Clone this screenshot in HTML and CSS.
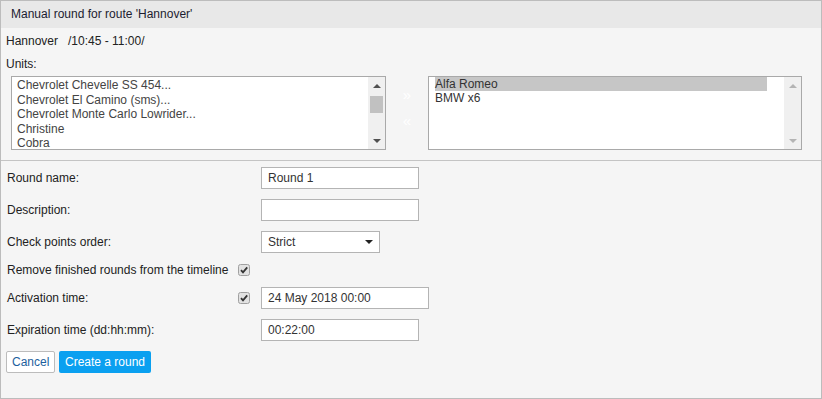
FILE: index.html
```html
<!DOCTYPE html>
<html lang="en">
<head>
	<meta charset="UTF-8">
	<title>Manual round</title>
	<link rel="stylesheet" href="styles.css">
</head>
<body>
	<div class="dialog">
		<div class="head">Manual round for route 'Hannover'</div>
		<div class="units">
			<div class="route">Hannover&nbsp;&nbsp;&nbsp;/10:45 - 11:00/</div>
			<div class="caption">Units:</div>
			<div class="lists">
				<div class="list">
					<ul class="items">
						<li>Chevrolet Chevelle SS 454...</li>
						<li>Chevrolet El Camino (sms)...</li>
						<li>Chevrolet Monte Carlo Lowrider...</li>
						<li>Christine</li>
						<li>Cobra</li>
					</ul>
					<div class="scroll">
						<span class="arr up"></span>
						<span class="thumb"></span>
						<span class="arr down"></span>
					</div>
				</div>
				<div class="move">
					<span>&raquo;</span>
					<span>&laquo;</span>
				</div>
				<div class="list">
					<ul class="items right">
						<li class="sel">Alfa Romeo</li>
						<li>BMW x6</li>
					</ul>
					<div class="scroll off">
						<span class="arr up"></span>
						<span class="arr down"></span>
					</div>
				</div>
			</div>
		</div>
		<div class="form">
			<div class="row">
				<div class="label">Round name:</div>
				<div class="field">Round 1</div>
			</div>
			<div class="row">
				<div class="label">Description:</div>
				<div class="field"></div>
			</div>
			<div class="row">
				<div class="label">Check points order:</div>
				<div class="field select">Strict<span class="caret"></span></div>
			</div>
			<div class="row small">
				<div class="label short">Remove finished rounds from the timeline</div>
				<span class="check"><svg width="12" height="12" viewBox="0 0 12 12"><rect x="0.5" y="0.5" width="11" height="11" rx="2" fill="#e2e2e2" stroke="#a0a0a0"/><path d="M3 6.2 L5 8.4 L9.2 3.4" fill="none" stroke="#333" stroke-width="1.8"/></svg></span>
			</div>
			<div class="row">
				<div class="label short">Activation time:</div>
				<span class="check"><svg width="12" height="12" viewBox="0 0 12 12"><rect x="0.5" y="0.5" width="11" height="11" rx="2" fill="#e2e2e2" stroke="#a0a0a0"/><path d="M3 6.2 L5 8.4 L9.2 3.4" fill="none" stroke="#333" stroke-width="1.8"/></svg></span>
				<div class="field wide">24 May 2018 00:00</div>
			</div>
			<div class="row">
				<div class="label">Expiration time (dd:hh:mm):</div>
				<div class="field">00:22:00</div>
			</div>
			<div class="row">
				<button class="btn">Cancel</button>
				<button class="btn primary">Create a round</button>
			</div>
		</div>
	</div>
</body>
</html>
```

FILE: styles.css
```css
* {
	margin: 0;
	padding: 0;
	box-sizing: border-box;
	list-style: none;
}
body {
	font-family: "Liberation Sans", Arial, sans-serif;
	font-size: 12px;
	color: #222;
	background: #fff;
}
.dialog {
	width: 822px;
	height: 399px;
	border: 1px solid #bcbcbc;
	background: #f5f5f5;
}
.head {
	height: 27px;
	line-height: 27px;
	padding-left: 10px;
	background: #e8e8e8;
	color: #1c1c30;
}
.units {
	padding: 5px 0 10px 5px;
	border-bottom: 1px solid #c4c4c4;
}
.route,
.caption {
	line-height: 16px;
}
.caption {
	margin-top: 7px;
}
.lists {
	display: flex;
	margin: 4px 0 0 5px;
}
.list {
	display: flex;
	height: 74px;
	border: 1px solid #a9a9a9;
	background: #fff;
}
.list:first-child {
	width: 375px;
}
.list:last-child {
	width: 374px;
}
.items {
	flex: 1;
	padding: 1px 0 0 5px;
	color: #444;
}
.items li {
	line-height: 14.5px;
	height: 14.5px;
	white-space: nowrap;
}
.items.right {
	padding: 0 17px 0 6px;
	color: #333;
}
.items.right li {
	height: 14px;
	line-height: 14px;
}
.items .sel {
	background: #c6c6c6;
}
.scroll {
	width: 17px;
	background: #f0f0f0;
	display: flex;
	flex-direction: column;
	align-items: center;
}
.arr {
	width: 0;
	height: 0;
	border-left: 4px solid transparent;
	border-right: 4px solid transparent;
}
.arr.up {
	margin-top: 7px;
	border-bottom: 4px solid #505050;
}
.arr.down {
	margin-top: auto;
	margin-bottom: 6px;
	border-top: 4px solid #505050;
}
.scroll.off .arr.up {
	border-bottom-color: #b4b4b4;
}
.scroll.off .arr.down {
	border-top-color: #b4b4b4;
}
.thumb {
	width: 13px;
	height: 17px;
	margin-top: 8px;
	background: #c1c1c1;
}
.move {
	width: 42px;
	display: flex;
	flex-direction: column;
	align-items: center;
	padding-top: 10px;
	gap: 9px;
	color: #fff;
	font-size: 15px;
	line-height: 17px;
}
.form {
	padding: 6px 0 0 5px;
	display: flex;
	flex-direction: column;
	gap: 10px;
}
.row {
	display: flex;
	align-items: center;
	height: 22px;
}
.row.small {
	height: 14px;
}
.label {
	width: 255px;
	padding-left: 1px;
	flex-shrink: 0;
}
.label.short {
	width: 232px;
}
.check {
	width: 12px;
	height: 12px;
	margin-right: 11px;
	display: flex;
}
.field {
	width: 158px;
	height: 22px;
	line-height: 20px;
	padding-left: 6px;
	border: 1px solid #b4b4b4;
	background: #fff;
	color: #333;
}
.field.wide {
	width: 168px;
}
.field.select {
	width: 119px;
	display: flex;
	align-items: center;
}
.caret {
	margin-left: auto;
	margin-right: 6px;
	width: 0;
	height: 0;
	border-left: 4px solid transparent;
	border-right: 4px solid transparent;
	border-top: 4px solid #222;
}
.btn {
	height: 22px;
	width: 49px;
	font-family: inherit;
	font-size: 12px;
	border-radius: 2px;
	padding: 0 5px;
	border: 1px solid #bcbcbc;
	background: #fff;
	color: #1d5f9e;
	margin-right: 4px;
	cursor: pointer;
}
.btn.primary {
	width: 92px;
	border: none;
	background: #0aa0f0;
	color: #fff;
	margin: 0;
}
```
